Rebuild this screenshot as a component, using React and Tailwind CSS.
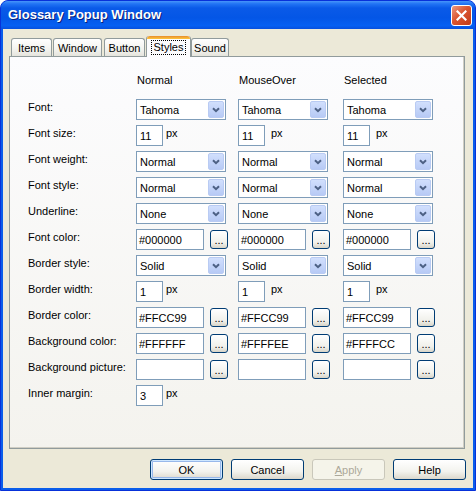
const COLS = ['Normal', 'MouseOver', 'Selected'];

const ROWS = [
  { label: 'Font:', type: 'select', values: ['Tahoma', 'Tahoma', 'Tahoma'] },
  { label: 'Font size:', type: 'num', values: ['11', '11', '11'] },
  { label: 'Font weight:', type: 'select', values: ['Normal', 'Normal', 'Normal'] },
  { label: 'Font style:', type: 'select', values: ['Normal', 'Normal', 'Normal'] },
  { label: 'Underline:', type: 'select', values: ['None', 'None', 'None'] },
  { label: 'Font color:', type: 'color', values: ['#000000', '#000000', '#000000'] },
  { label: 'Border style:', type: 'select', values: ['Solid', 'Solid', 'Solid'] },
  { label: 'Border width:', type: 'num', values: ['1', '1', '1'] },
  { label: 'Border color:', type: 'color', values: ['#FFCC99', '#FFCC99', '#FFCC99'] },
  { label: 'Background color:', type: 'color', values: ['#FFFFFF', '#FFFFEE', '#FFFFCC'] },
  { label: 'Background picture:', type: 'color', values: ['', '', ''] },
  { label: 'Inner margin:', type: 'num', values: ['3'] },
];

const TABS = [
  { name: 'Items', w: 'w-[41px]', ml: 'ml-[2px]' },
  { name: 'Window', w: 'w-[49px]', ml: 'ml-[1px]' },
  { name: 'Button', w: 'w-[41px]', ml: 'ml-[2px]' },
  { name: 'Styles', w: 'w-[45px]', ml: 'ml-[1px]', active: true },
  { name: 'Sound', w: 'w-[38px]', ml: 'ml-0' },
];

// combobox, XP style
const Select = ({ value }) => (
  <div className="flex h-[21px] w-[90px] border border-[#7F9DB9] bg-white p-px">
    <div className="flex flex-1 items-center pl-[2px] leading-[14px]">{value}</div>
    <div className="flex w-[16px] items-center justify-center rounded-[2px] border border-[#B9CBF3] bg-[linear-gradient(to_bottom,#D1DFFD,#B7CAF5)]">
      <svg width="8" height="6" viewBox="0 0 8 6">
        <path d="M1 1.2 L4 4.2 L7 1.2" fill="none" stroke="#4D6185" strokeWidth="2" />
      </svg>
    </div>
  </div>
);

const Dots = () => (
  <div className="ml-[6px] mt-px flex h-[19px] w-[18px] items-end justify-center rounded-[3px] border border-[#003C74] bg-[linear-gradient(to_bottom,#FFFFFF,#F0F0EA_70%,#D8D4C8)] pb-[2px] leading-[11px]">
    ...
  </div>
);

const Cell = ({ type, value, col }) => {
  if (type === 'select') return <Select value={value} />;
  if (type === 'num')
    return (
      <div className="flex items-start">
        <div className="flex h-[21px] w-[27px] items-center border border-[#7F9DB9] bg-white pl-[3px] leading-[14px]">
          {value}
        </div>
        <span className={`${col === 0 ? 'ml-[3px]' : 'ml-[6px]'} mt-[1px] leading-[14px]`}>px</span>
      </div>
    );
  return (
    <div className="flex items-start">
      <div className="flex h-[21px] w-[68px] items-center border border-[#7F9DB9] bg-white pl-[2px] leading-[14px]">
        {value}
      </div>
      <Dots />
    </div>
  );
};

const Button = ({ children, primary, disabled }) => (
  <div
    className={`flex h-[21px] w-[73px] items-center justify-center rounded-[3px] border leading-[14px] ${
      disabled
        ? 'border-[#C9C7BA] bg-[#F5F4EA] text-[#ACA899]'
        : 'border-[#003C74] bg-[linear-gradient(to_bottom,#FFFFFF,#F3F3EE_60%,#DCD8CC)]'
    } ${primary ? 'shadow-[inset_0_0_0_1px_#CEE7FF,inset_0_0_0_2px_#98B8EA]' : ''}`}
  >
    {children}
  </div>
);

export default function App() {
  return (
    <div className="h-[491px] w-[476px] bg-white font-['Liberation_Sans',Arial,sans-serif] text-[11px] text-black">
      <div className="flex h-full flex-col overflow-hidden rounded-t-[8px] border border-[#0831D9] bg-[#0A5DEA]">
        {/* title bar */}
        <div className="flex h-[28px] shrink-0 items-center justify-between bg-[linear-gradient(to_bottom,#4795FA_0%,#2274F4_10%,#0A5AE8_25%,#0456E6_60%,#0660F2_88%,#0750DE_100%)] pl-[7px] pr-[3px]">
          <span className="text-[13px] font-bold leading-[16px] text-white [text-shadow:1px_1px_0_#0A1E78]">
            Glossary Popup Window
          </span>
          <div className="flex h-[21px] w-[21px] items-center justify-center rounded-[3px] border border-white bg-[linear-gradient(135deg,#EC9A82,#DA5530_45%,#C23A18)]">
            <svg width="11" height="11" viewBox="0 0 11 11">
              <path d="M1.5 1.5 L9.5 9.5 M9.5 1.5 L1.5 9.5" stroke="white" strokeWidth="2.2" strokeLinecap="square" />
            </svg>
          </div>
        </div>

        {/* client area */}
        <div className="mx-[2px] mb-[2px] flex flex-1 flex-col bg-[#ECE9D8] pl-[6px] pt-[7px]">
          {/* tab strip */}
          <div className="flex h-[20px] items-end">
            {TABS.map((t) =>
              t.active ? (
                <div
                  key={t.name}
                  className={`relative z-10 -mb-px flex h-[21px] ${t.w} ${t.ml} flex-col rounded-t-[3px] border-x border-[#919B9C] bg-[#FCFCFE]`}
                >
                  <div className="h-[3px] rounded-t-[3px] bg-[linear-gradient(to_bottom,#E68B2C,#FFC73C)]" />
                  <div className="flex flex-1 items-start justify-center pt-px">
                    <span className="border border-dotted border-black px-[2px] leading-[13px]">{t.name}</span>
                  </div>
                </div>
              ) : (
                <div
                  key={t.name}
                  className={`flex h-[18px] ${t.w} ${t.ml} items-center justify-center rounded-t-[3px] border-x border-t border-[#919B9C] bg-[linear-gradient(to_bottom,#FFFFFF,#F3F3EF_60%,#E5E4DD)] leading-[14px]`}
                >
                  {t.name}
                </div>
              )
            )}
          </div>

          {/* tab panel */}
          <div className="h-[393px] w-[456px] border border-[#919B9C] bg-[linear-gradient(to_bottom,#FCFCFE,#F4F3EE)] pl-[18px] pt-[16px] shadow-[inset_-1px_-1px_0_#D0CEC4]">
            <div className="grid grid-cols-[108px_102px_105px_1fr] gap-y-[5px] leading-[14px]">
              <div className="h-[21px]" />
              {COLS.map((c) => (
                <div key={c} className="pl-px">
                  {c}
                </div>
              ))}
              {ROWS.map((r) => (
                <div key={r.label} className="contents">
                  <div className="h-[21px] pt-[1px]">{r.label}</div>
                  {[0, 1, 2].map((i) =>
                    r.values[i] !== undefined ? (
                      <Cell key={i} type={r.type} value={r.values[i]} col={i} />
                    ) : (
                      <div key={i} />
                    )
                  )}
                </div>
              ))}
            </div>
          </div>

          {/* dialog buttons */}
          <div className="mt-[10px] flex w-[457px] justify-end gap-[8px]">
            <Button primary>OK</Button>
            <Button>Cancel</Button>
            <Button disabled>
              <span>
                <span className="underline">A</span>pply
              </span>
            </Button>
            <Button>Help</Button>
          </div>
        </div>
      </div>
    </div>
  );
}
